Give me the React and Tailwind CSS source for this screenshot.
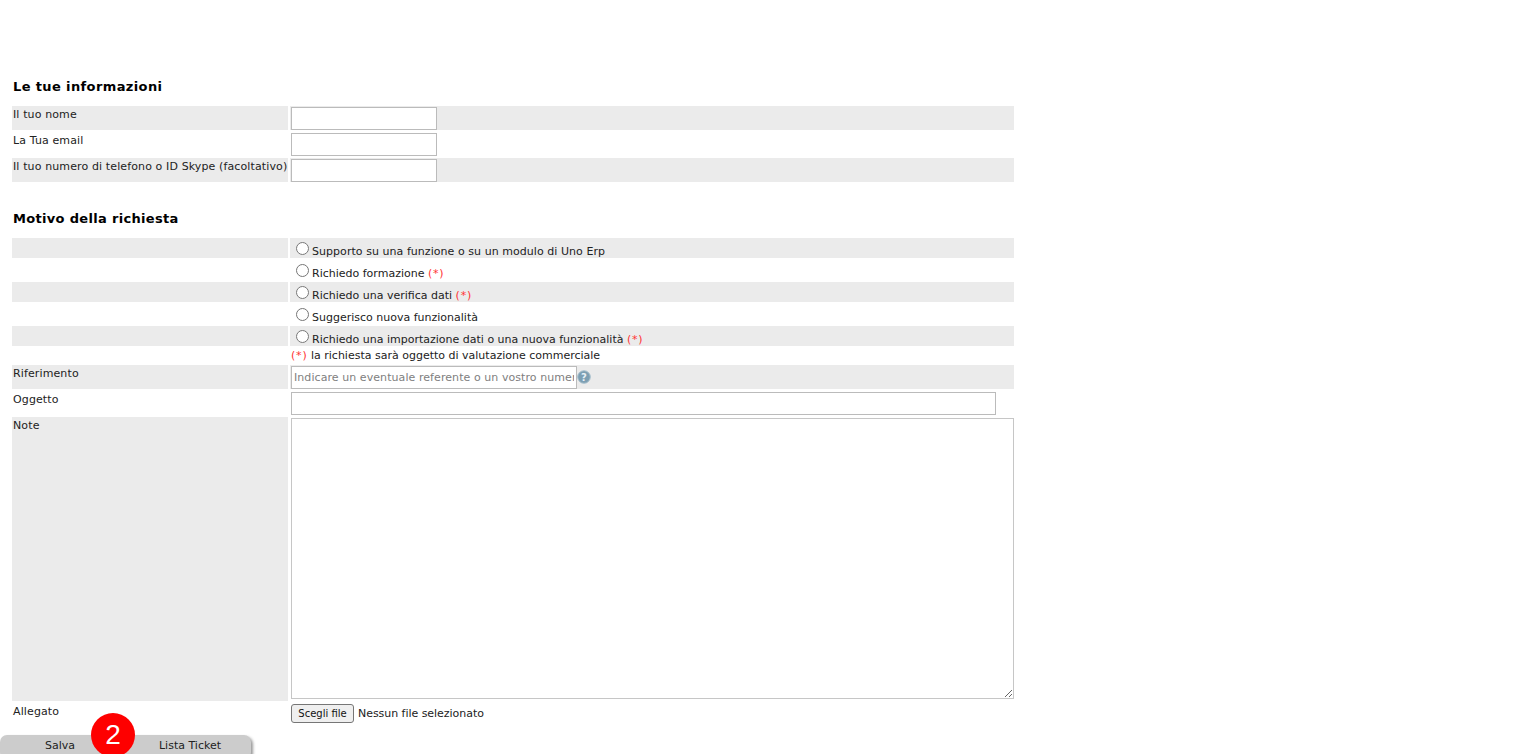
const font = { fontFamily: '"DejaVu Sans", Verdana, sans-serif' };

function Row({ label, shaded, h, children }) {
  return (
    <div className="flex gap-[2px]" style={{ height: h }}>
      <div className={`w-[276px] shrink-0 text-[11px] leading-[13px] tracking-[0.12px] pt-[2px] pl-px text-[#222] whitespace-nowrap ${shaded ? 'bg-[#ebebeb]' : ''}`}>{label}</div>
      <div className={`w-[724px] shrink-0 flex items-start ${shaded ? 'bg-[#ebebeb]' : ''}`}>{children}</div>
    </div>
  );
}

function TextInput({ w = 'w-[146px]', placeholder }) {
  return (
    <input
      placeholder={placeholder}
      className={`${w} h-[23px] mt-px ml-px bg-white border border-[#bbbbbb] px-[2px] text-[11px] tracking-[0.07px] placeholder:text-[#808080] outline-none`}
      style={font}
    />
  );
}

function Radio({ shaded, children }) {
  return (
    <Row shaded={shaded} h={20} label="">
      <div className="h-[20px] flex items-start pl-[6px] text-[11px] leading-[13px] text-[#222]">
        <input type="radio" name="motivo" className="w-[13px] h-[13px] m-0 mt-[4px] mr-[3px]" />
        <span className="mt-[7px] whitespace-nowrap">{children}</span>
      </div>
    </Row>
  );
}

const Star = () => <span className="text-[#f33] tracking-[0.8px]">(*)</span>;

export default function App() {
  return (
    <div className="relative h-[754px] w-[1536px] overflow-hidden bg-white" style={font}>
      <div className="pl-[12px] pt-[79px] flex flex-col">
        <h2 className="text-[13px] leading-[16px] font-bold tracking-[0.38px] text-black pl-px">Le tue informazioni</h2>
        <div className="flex flex-col gap-[2px] mt-[11px]">
          <Row shaded h={24} label="Il tuo nome"><TextInput /></Row>
          <Row h={24} label="La Tua email"><TextInput /></Row>
          <Row shaded h={24} label="Il tuo numero di telefono o ID Skype (facoltativo)"><TextInput /></Row>
        </div>
        <h2 className="text-[13px] leading-[16px] font-bold tracking-[0.32px] text-black pl-px mt-[29px]">Motivo della richiesta</h2>
        <div className="flex flex-col mt-[11px]">
          <div className="flex flex-col gap-[2px]">
            <Radio shaded><span className="tracking-[0.05px]">Supporto su una funzione o su un modulo di Uno Erp</span></Radio>
            <Radio>Richiedo formazione <Star /></Radio>
            <Radio shaded>Richiedo una verifica dati <Star /></Radio>
            <Radio>Suggerisco nuova funzionalità</Radio>
            <Radio shaded>Richiedo una importazione dati o una nuova funzionalità <Star /></Radio>
          </div>
          <div className="h-[19px] pl-[279px] pt-[3px] text-[11px] leading-[13px] text-[#222] whitespace-nowrap">
            <Star /> la richiesta sarà oggetto di valutazione commerciale
          </div>
          <div className="flex flex-col gap-[2px]">
            <Row shaded h={24} label="Riferimento">
              <TextInput w="w-[286px]" placeholder="Indicare un eventuale referente o un vostro numero d'ordine" />
              <svg width="14" height="14" viewBox="0 0 14 14" className="mt-[5px]">
                <circle cx="7" cy="7" r="6.3" fill="#7d9fb3" stroke="#a9c0cd" strokeWidth="1" />
                <text x="7" y="10.5" textAnchor="middle" fontSize="10" fontWeight="700" fill="#e8f0f5" style={font}>?</text>
              </svg>
            </Row>
            <Row h={24} label="Oggetto"><TextInput w="w-[705px]" /></Row>
            <Row shaded h={284} label="Note">
              <div className="w-full h-full bg-white">
                <textarea className="block w-[723px] h-[281px] mt-px ml-px bg-white border border-[#c6c6c6] outline-none" />
              </div>
            </Row>
            <Row h={24} label="Allegato">
              <div className="flex items-center h-[19px] mt-px ml-px text-[11px] text-[#222]">
                <button className="w-[63px] h-[19px] bg-[#efefef] border border-[#767676] rounded-[3px] text-[10px] leading-[13px] text-[#111]" style={font}>Scegli file</button>
                <span className="ml-[4px] leading-[13px] whitespace-nowrap tracking-[-0.04px]">Nessun file selezionato</span>
              </div>
            </Row>
          </div>
        </div>
      </div>

      <div className="mt-[8px] flex w-[251px] h-[24px] rounded-[7px] bg-[#cccccc] shadow-[2px_2px_3px_#999] text-[11px] leading-[22px] text-[#222]">
        <button className="w-[120px] h-[22px] text-center" style={font}>Salva</button>
        <button className="w-[120px] ml-[10px] h-[22px] text-center" style={font}>Lista Ticket</button>
      </div>

      <div
        className="absolute left-[91px] top-[713px] w-[44px] h-[44px] rounded-full bg-[#fe0000] text-white text-[28px] leading-[44px] text-center"
        style={{ fontFamily: '"Liberation Sans", Arial, sans-serif' }}
      >
        2
      </div>
    </div>
  );
}
